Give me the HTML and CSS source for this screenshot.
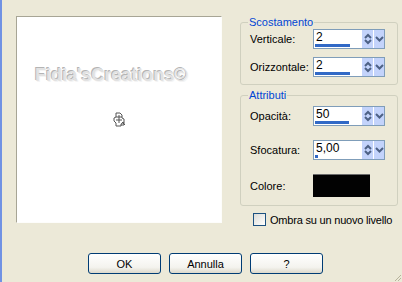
FILE: index.html
```html
<!DOCTYPE html>
<html lang="it">
<head>
    <meta charset="UTF-8">
    <title>Sfalsamento ombra</title>
    <link rel="stylesheet" href="styles.css">
</head>
<body>
    <div class="main">
        <div class="preview">
            <div class="preview-text">Fidia'sCreations©</div>
            <svg class="preview-cursor" width="14" height="15" viewBox="0 0 14 15">
                <path d="M4 1h4l2 2v3l2 1v3l-3 2v2H4v-3L2 9V6l2-1z" fill="#fff" stroke="#555" stroke-width="1"/>
                <path d="M4 5h6M4 8h6M7 3v8M10 10l3 3M12 10v3h-3" fill="none" stroke="#555" stroke-width="1"/>
            </svg>
        </div>

        <div class="side">
            <fieldset class="group">
                <legend>Scostamento</legend>
                <div class="field">
                    <label>Verticale:</label>
                    <div class="spin">
                        <div class="spin-cell">
                            <span class="spin-value">2</span>
                            <span class="spin-bar" style="width:35px"></span>
                        </div>
                        <span class="spin-btn updown">
                            <svg width="10" height="16" viewBox="0 0 10 16"><path d="M2 7l3-3 3 3M2 9l3 3 3-3" fill="none" stroke="#4d6185" stroke-width="2"/></svg>
                        </span>
                        <span class="spin-btn drop">
                            <svg width="9" height="16" viewBox="0 0 9 16"><path d="M1 6l3.5 3.5L8 6" fill="none" stroke="#4d6185" stroke-width="2"/></svg>
                        </span>
                    </div>
                </div>
                <div class="field">
                    <label>Orizzontale:</label>
                    <div class="spin">
                        <div class="spin-cell">
                            <span class="spin-value">2</span>
                            <span class="spin-bar" style="width:35px"></span>
                        </div>
                        <span class="spin-btn updown">
                            <svg width="10" height="16" viewBox="0 0 10 16"><path d="M2 7l3-3 3 3M2 9l3 3 3-3" fill="none" stroke="#4d6185" stroke-width="2"/></svg>
                        </span>
                        <span class="spin-btn drop">
                            <svg width="9" height="16" viewBox="0 0 9 16"><path d="M1 6l3.5 3.5L8 6" fill="none" stroke="#4d6185" stroke-width="2"/></svg>
                        </span>
                    </div>
                </div>
            </fieldset>

            <fieldset class="group group-attr">
                <legend>Attributi</legend>
                <div class="field">
                    <label>Opacità:</label>
                    <div class="spin">
                        <div class="spin-cell">
                            <span class="spin-value">50</span>
                            <span class="spin-bar" style="width:34px"></span>
                        </div>
                        <span class="spin-btn updown">
                            <svg width="10" height="16" viewBox="0 0 10 16"><path d="M2 7l3-3 3 3M2 9l3 3 3-3" fill="none" stroke="#4d6185" stroke-width="2"/></svg>
                        </span>
                        <span class="spin-btn drop">
                            <svg width="9" height="16" viewBox="0 0 9 16"><path d="M1 6l3.5 3.5L8 6" fill="none" stroke="#4d6185" stroke-width="2"/></svg>
                        </span>
                    </div>
                </div>
                <div class="field">
                    <label>Sfocatura:</label>
                    <div class="spin">
                        <div class="spin-cell">
                            <span class="spin-value">5,00</span>
                            <span class="spin-bar" style="width:3px"></span>
                        </div>
                        <span class="spin-btn updown">
                            <svg width="10" height="16" viewBox="0 0 10 16"><path d="M2 7l3-3 3 3M2 9l3 3 3-3" fill="none" stroke="#4d6185" stroke-width="2"/></svg>
                        </span>
                        <span class="spin-btn drop">
                            <svg width="9" height="16" viewBox="0 0 9 16"><path d="M1 6l3.5 3.5L8 6" fill="none" stroke="#4d6185" stroke-width="2"/></svg>
                        </span>
                    </div>
                </div>
                <div class="field">
                    <label>Colore:</label>
                    <div class="swatch"></div>
                </div>
            </fieldset>

            <div class="check-row">
                <span class="checkbox"></span>
                <span class="check-label">Ombra su un nuovo livello</span>
            </div>
        </div>
    </div>

    <div class="footer">
        <button class="btn">OK</button>
        <button class="btn">Annulla</button>
        <button class="btn">?</button>
        <svg class="grip" width="8" height="8" viewBox="0 0 8 8">
            <path d="M7 1L1 7M7 4L4 7" stroke="#b8b49c" stroke-width="1"/>
        </svg>
    </div>
</body>
</html>
```

FILE: styles.css
```css
body {
    margin: 0;
    height: 282px;
    box-sizing: border-box;
    border-left: 2px solid #7192e4;
    background-color: #ece9d8;
    color: #000;
    font-family: "Liberation Sans", Arial, sans-serif;
    font-size: 11px;
    display: flex;
    flex-direction: column;
}
.main {
    display: flex;
    padding: 16px 0 0 14px;
}
.preview {
    width: 206px;
    height: 207px;
    box-sizing: border-box;
    border: 1px solid;
    border-color: #a7a595 #fdfdfb #fdfdfb #a7a595;
    background: #fff;
    display: flex;
    flex-direction: column;
    align-items: center;
}
.preview-text {
    align-self: flex-start;
    margin: 47px 0 0 18px;
    font-size: 18px;
    font-weight: bold;
    line-height: 22px;
    color: #e2e2e2;
    text-shadow: -1px -1px 0 #b4b4b4, 1px 1px 0 #f4f4f4;
}
.preview-cursor {
    margin-top: 26px;
}
.side {
    margin-left: 18px;
    width: 158px;
}
.group {
    margin: 0;
    padding: 0 12px 7px 9px;
    border: 1px solid #d0d0bf;
    border-radius: 3px;
}
.group legend {
    padding: 0 1px;
    margin-left: -2px;
    color: #0046d5;
    line-height: 13px;
}
.group-attr {
    margin-top: 4px;
    padding-top: 4px;
    padding-bottom: 8px;
}
.field {
    display: flex;
    align-items: center;
}
.field + .field {
    margin-top: 8px;
}
.group-attr .field + .field {
    margin-top: 14px;
}
.field label {
    width: 63px;
}
.spin {
    width: 72px;
    height: 20px;
    box-sizing: border-box;
    border: 1px solid #7f9db9;
    background: #fff;
    display: flex;
}
.spin-cell {
    flex: 1;
    display: flex;
    flex-direction: column;
    justify-content: space-between;
}
.spin-value {
    padding-left: 2px;
    font-size: 12px;
    line-height: 14px;
}
.spin-bar {
    height: 3px;
    margin: 0 0 1px 1px;
    background: #3169c6;
}
.spin-btn {
    display: flex;
    align-items: center;
    justify-content: center;
    background: #c3d3fb;
    border-left: 1px solid #fff;
}
.updown {
    width: 11px;
}
.drop {
    width: 10px;
}
.swatch {
    width: 57px;
    height: 23px;
    box-sizing: border-box;
    background: #020202;
    border-top: 1px solid #6b6b6b;
}
.check-row {
    display: flex;
    align-items: center;
    gap: 4px;
    margin: 7px 0 0 13px;
}
.check-label {
    letter-spacing: -0.2px;
}
.checkbox {
    width: 13px;
    height: 13px;
    box-sizing: border-box;
    border: 1px solid #1c5180;
    background: linear-gradient(135deg, #dcdcd7, #fff);
}
.footer {
    margin-top: auto;
    display: flex;
    align-items: flex-end;
    gap: 8px;
    padding: 0 0 0 86px;
}
.btn {
    width: 73px;
    height: 21px;
    margin-bottom: 8px;
    padding: 0;
    border: 1px solid #003c74;
    border-radius: 3px;
    background: linear-gradient(#fff, #f4f3ee 70%, #dcd8cb);
    font-family: "Liberation Sans", Arial, sans-serif;
    font-size: 11px;
    color: #000;
}
.grip {
    margin-left: auto;
}
```
